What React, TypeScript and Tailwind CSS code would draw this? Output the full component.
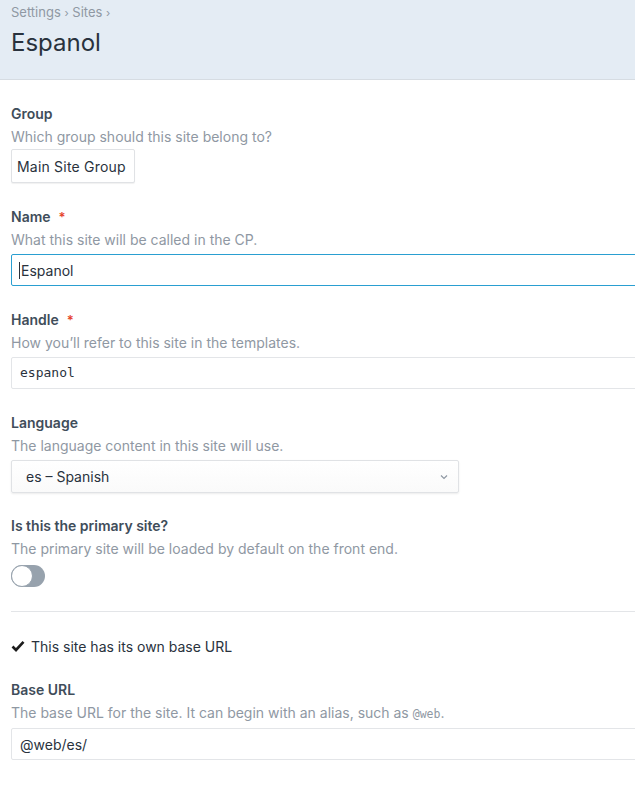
import React from 'react';

const sans = "font-['Inter','Noto_Sans',sans-serif]";
const mono = "font-['DejaVu_Sans_Mono','Liberation_Mono',monospace]";

const Label: React.FC<{ text: string; required?: boolean }> = ({ text, required }) => (
  <div className="flex items-center text-[14px] leading-5 font-semibold text-[#3f4d5a]">
    <span>{text}</span>
    {required && <span className="ml-2 text-[13px] text-[#e5422b]">*</span>}
  </div>
);

const Hint: React.FC<{ children: React.ReactNode }> = ({ children }) => (
  <div className="mt-[3px] text-[14px] leading-5 text-[#8f98a3]">{children}</div>
);

const App: React.FC = () => {
  return (
    <div className={`min-h-screen w-[635px] overflow-hidden bg-white ${sans}`}>
      {/* header */}
      <div className="h-20 bg-[#e4ecf4] border-b border-[#d6dce2] px-[11px] pt-[3px]">
        <div className="text-[13px] leading-[18px] text-[#8f98a3]">
          Settings <span className="text-[11px]">›</span> Sites <span className="text-[11px]">›</span>
        </div>
        <h1 className="mt-[7px] text-[24px] leading-7 text-[#29323d]">Espanol</h1>
      </div>

      <div className="pl-[11px] pt-6 flex flex-col gap-6">
        {/* Group */}
        <div>
          <Label text="Group" />
          <Hint>Which group should this site belong to?</Hint>
          <div className="mt-[2px] w-[124px] h-[34px] border border-[#e0e2e5] rounded-[2px] shadow-[0_1px_1px_rgba(0,0,0,0.06)] bg-white flex items-center pl-[5px] overflow-hidden">
            <span className="text-[14px] text-[#29323d] whitespace-nowrap tracking-[0.2px]">Main Site Group</span>
          </div>
        </div>

        {/* Name */}
        <div>
          <Label text="Name" required />
          <Hint>What this site will be called in the CP.</Hint>
          <div className="mt-[4px] w-[640px] h-8 border border-[#2a9fd1] rounded-[2px] flex items-center pl-[7px] text-[14px] text-[#29323d]">
            <span className="w-px h-[17px] bg-[#29323d] mr-px" />
            Espanol
          </div>
        </div>

        {/* Handle */}
        <div>
          <Label text="Handle" required />
          <Hint>How you’ll refer to this site in the templates.</Hint>
          <div className={`mt-[4px] w-[640px] h-8 border border-[#e3e5e8] rounded-[2px] flex items-center pl-[8px] text-[13px] text-[#29323d] ${mono}`}>
            espanol
          </div>
        </div>

        {/* Language */}
        <div>
          <Label text="Language" />
          <Hint>The language content in this site will use.</Hint>
          <div className="mt-[4px] w-[448px] h-[33px] border border-[#e0e2e5] rounded-[2px] shadow-[0_1px_2px_rgba(0,0,0,0.08)] bg-gradient-to-b from-white to-[#fafafa] flex items-center justify-between pl-[14px] pr-[10px]">
            <span className="text-[14px] text-[#29323d]">es – Spanish</span>
            <svg width="8" height="6" viewBox="0 0 8 6" className="text-[#8f98a3]">
              <path d="M1 1.5 L4 4.5 L7 1.5" fill="none" stroke="currentColor" strokeWidth="1.2" />
            </svg>
          </div>
        </div>

        {/* Primary */}
        <div className="-mt-px">
          <Label text="Is this the primary site?" />
          <Hint>The primary site will be loaded by default on the front end.</Hint>
          <div className="mt-[6px] w-[34px] h-[22px] rounded-full bg-[#97a2ad] relative">
            <div className="absolute left-0 top-0 w-[22px] h-[22px] rounded-full bg-white border border-[#97a2ad]" />
          </div>
        </div>

        <div className="h-px bg-[#e3e5e8]" />

        {/* Checkbox */}
        <div className="flex items-center h-5">
          <svg width="14" height="12" viewBox="0 0 14 12" className="mr-[6px]">
            <path d="M1.5 6.5 L5 10 L12.5 1.8" fill="none" stroke="#1c1c1c" strokeWidth="2.6" strokeLinejoin="miter" />
          </svg>
          <span className="text-[14px] text-[#29323d]">This site has its own base URL</span>
        </div>

        {/* Base URL */}
        <div className="pb-10">
          <Label text="Base URL" />
          <Hint>
            The base URL for the site. It can begin with an alias, such as{' '}
            <span className={`text-[11.5px] ${mono}`}>@web</span>.
          </Hint>
          <div className="mt-[4px] w-[640px] h-8 border border-[#e3e5e8] rounded-[2px] flex items-center pl-[8px] text-[14px] text-[#29323d]">
            @web/es/
          </div>
        </div>
      </div>
    </div>
  );
};

export default App;
